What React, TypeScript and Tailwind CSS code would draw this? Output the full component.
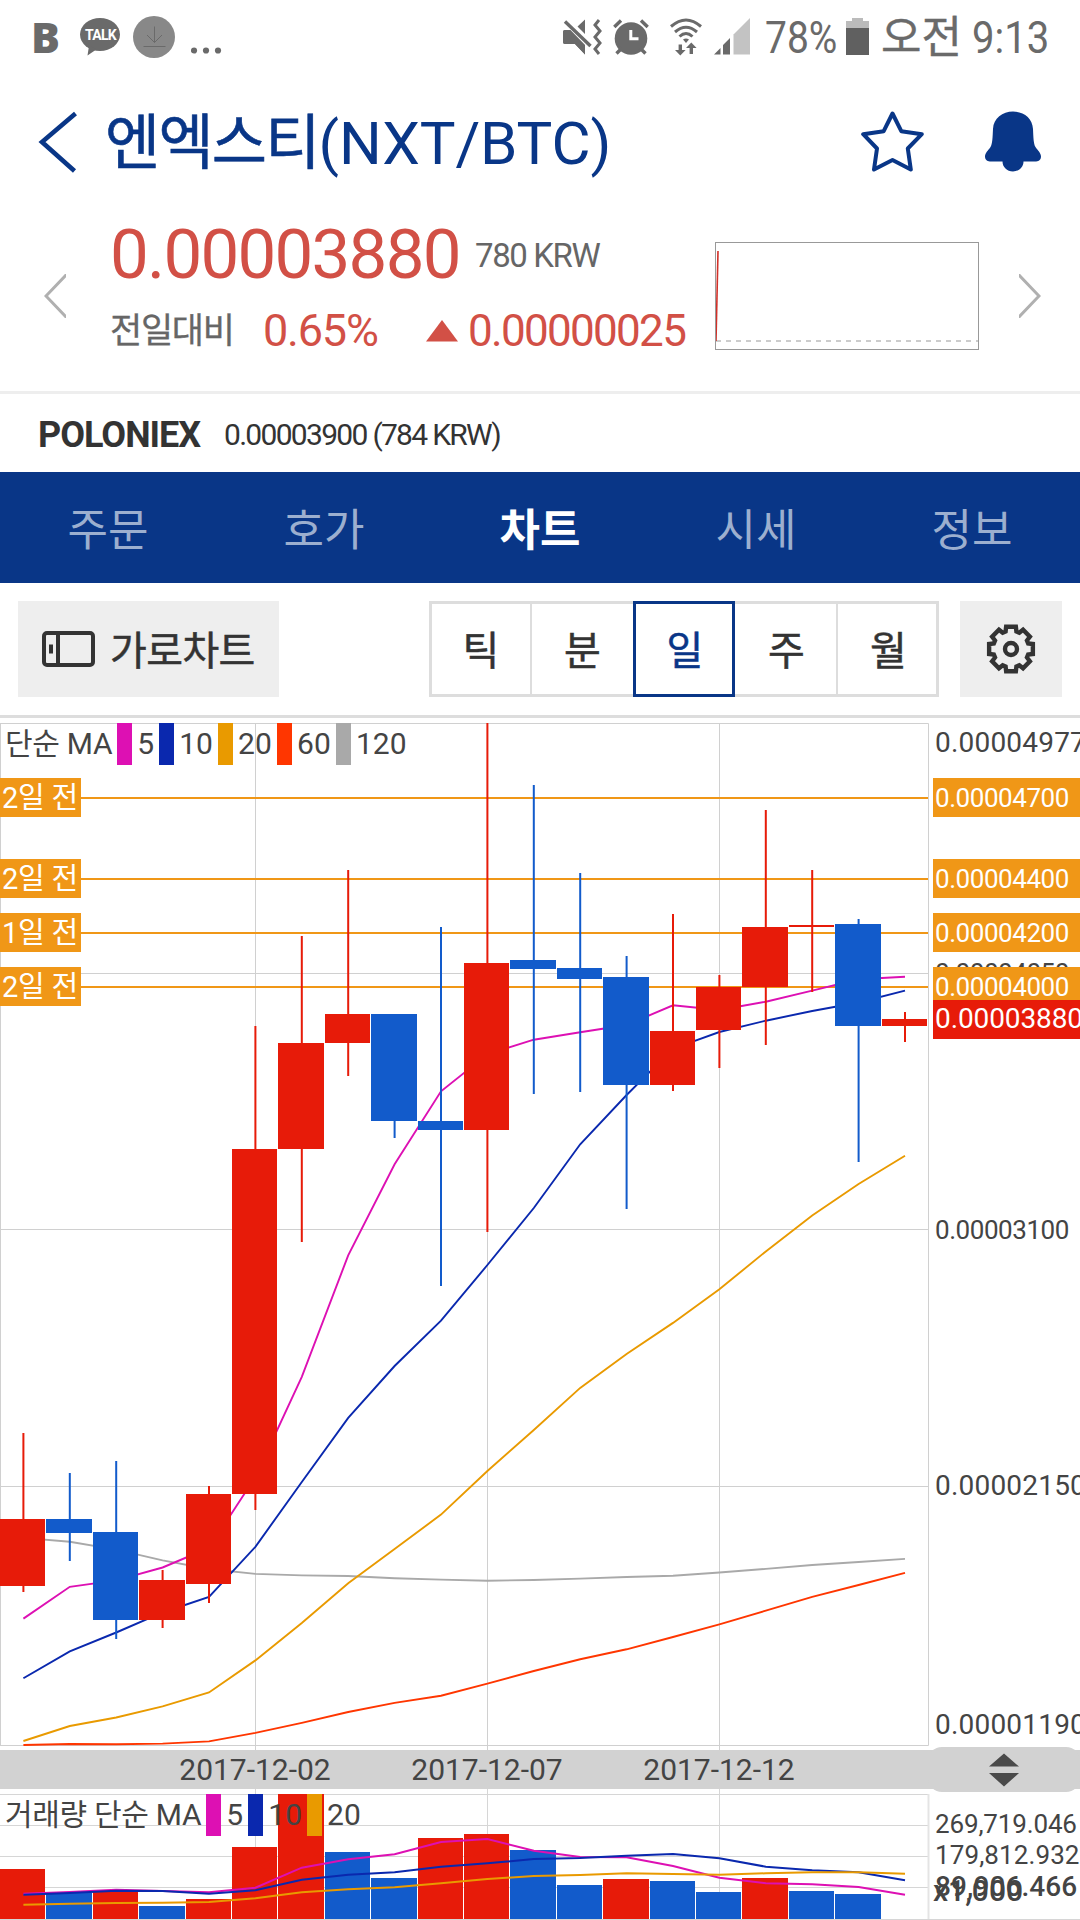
const STEP = 46.4;

const UP = "#e71b09";
const DOWN = "#125bcb";

// [direction, body top, body bottom, high, low] in chart pixels
const candles: [string, number, number, number, number][] = [
  [UP, 1519, 1586, 1433, 1592],
  [DOWN, 1519, 1533, 1473, 1561],
  [DOWN, 1532, 1620, 1461, 1639],
  [UP, 1580, 1620, 1570, 1628],
  [UP, 1494, 1584, 1486, 1603],
  [UP, 1149, 1494, 1026, 1510],
  [UP, 1043, 1149, 936, 1242],
  [UP, 1014, 1043, 870, 1076],
  [DOWN, 1014, 1121, 1014, 1138],
  [DOWN, 1121, 1130, 927, 1286],
  [UP, 963, 1130, 723, 1232],
  [DOWN, 960, 969, 785, 1094],
  [DOWN, 968, 979, 873, 1092],
  [DOWN, 977, 1085, 956, 1209],
  [UP, 1031, 1085, 914, 1091],
  [UP, 987, 1030, 975, 1068],
  [UP, 927, 987, 810, 1045],
  [UP, 925, 927, 870, 992],
  [DOWN, 924, 1026, 919, 1162],
  [UP, 1019, 1026, 1012, 1042],
];

const averages = [
  {
    color: "#a9a9a9",
    points: [1537.9, 1541.8, 1549.6, 1560.4, 1569, 1573.9, 1575.4, 1576, 1578.2, 1579.6, 1580.7, 1580, 1578.6, 1577, 1575.7, 1572.5, 1568.9, 1565, 1562, 1558.9],
  },
  {
    color: "#ff3600",
    points: [1745, 1744, 1744.3, 1743.6, 1741.4, 1732.9, 1722.9, 1712, 1702.9, 1695.7, 1683.6, 1671, 1659.3, 1649.3, 1637, 1624.3, 1610.7, 1596.8, 1585, 1572.9],
  },
  {
    color: "#e99a00",
    points: [1741, 1726, 1717.5, 1706.4, 1692.5, 1660.4, 1622.9, 1583.2, 1549, 1514.6, 1471, 1430, 1387.9, 1354, 1322.9, 1289.3, 1251.4, 1215.4, 1184, 1155.7],
  },
  {
    color: "#0a28ae",
    points: [1678.2, 1651.4, 1632.5, 1612.5, 1597, 1546.8, 1482, 1417.9, 1366, 1320.7, 1265, 1208, 1144.3, 1095, 1048.7, 1032, 1020.7, 1011, 1002.5, 990.7],
  },
  {
    color: "#dd10b3",
    points: [1618.6, 1586.8, 1580.4, 1567.5, 1548, 1477, 1376.8, 1255.4, 1164.3, 1091.3, 1054.3, 1039.7, 1032.3, 1025, 1005.3, 1010, 1001.7, 990.7, 979.3, 976.7],
  },
];

const volumes: [string, number][] = [
  [UP, 1869],
  [DOWN, 1893],
  [UP, 1892],
  [DOWN, 1906],
  [UP, 1899],
  [UP, 1847],
  [UP, 1794],
  [DOWN, 1852],
  [DOWN, 1878],
  [UP, 1838],
  [UP, 1834],
  [DOWN, 1850],
  [DOWN, 1885],
  [UP, 1879],
  [DOWN, 1881],
  [DOWN, 1892],
  [UP, 1878],
  [DOWN, 1891],
  [DOWN, 1894],
];

const volumeAverages = [
  {
    color: "#dd10b3",
    points: [1893.7, 1892, 1889.7, 1891, 1892.3, 1887.7, 1867.7, 1859.3, 1854.3, 1842, 1839, 1850.7, 1857, 1857.3, 1866, 1877.7, 1883.3, 1884.3, 1887, 1894.7],
  },
  {
    color: "#0a28ae",
    points: [1894.7, 1893, 1890.7, 1891, 1893.7, 1890.3, 1879.7, 1874.7, 1872.3, 1866.7, 1863.3, 1859, 1858, 1855.7, 1854, 1858.3, 1866.7, 1870.3, 1872.3, 1880.3],
  },
  {
    color: "#e99a00",
    points: [1904.7, 1903.7, 1903, 1902.7, 1902, 1898.3, 1892.3, 1889.3, 1887.3, 1883.3, 1879, 1876, 1875, 1873.3, 1874, 1874.7, 1873.3, 1872.3, 1872.3, 1873.7],
  },
];

const alerts = [
  { top: 55, label: "2일 전", price: "0.00004700" },
  { top: 136, label: "2일 전", price: "0.00004400" },
  { top: 190, label: "1일 전", price: "0.00004200" },
  { top: 244, label: "2일 전", price: "0.00004000" },
];

const legend = [
  { color: "#dd10b3", label: "5" },
  { color: "#0a28ae", label: "10" },
  { color: "#e99a00", label: "20" },
  { color: "#ff3600", label: "60" },
  { color: "#a9a9a9", label: "120" },
];

const tabs = ["주문", "호가", "차트", "시세", "정보"];

const left = (i: number) => Math.round(i * STEP);
const toPoints = (ys: number[]) => ys.map((y, i) => `${(i * STEP + 23.4).toFixed(1)},${y}`).join(" ");

function gearPoints() {
  const pts: string[] = [];
  for (let k = 0; k < 8; k++) {
    for (const [deg, r] of [[-17.5, 18], [-12.5, 22.4], [12.5, 22.4], [17.5, 18]]) {
      const a = ((k * 45 + deg - 90) * Math.PI) / 180;
      pts.push(`${(25 + r * Math.cos(a)).toFixed(2)},${(25 + r * Math.sin(a) * 1.02).toFixed(2)}`);
    }
  }
  return pts.join(" ");
}

function StatusBar() {
  return (
    <div className="relative flex h-[73px] items-center text-[#6a6a6a]">
      <span className="ml-[31px] w-[49px] font-['Open_Sans'] text-[43px] leading-none font-extrabold">B</span>
      <div className="relative h-[38px] w-10">
        <svg className="absolute inset-0" width="40" height="38" viewBox="0 0 40 38" fill="#6a6a6a">
          <ellipse cx="20" cy="16.5" rx="20" ry="16.5" />
          <path d="M9 28 L7.5 37.5 L17 31 Z" />
        </svg>
        <span className="absolute top-[10px] left-[5px] font-[Roboto] text-[14px] leading-none font-bold tracking-[-0.7px] text-white">
          TALK
        </span>
      </div>
      <svg className="ml-[13px]" width="42" height="42" viewBox="0 0 42 42" fill="none" stroke="#6a6a6a" strokeWidth="1">
        <circle cx="21" cy="21" r="21" fill="#888" stroke="none" />
        <path d="M21.5 10.5 V26.5 M14 19 L21.5 26.5 L29 19 M10.5 30.5 H32.5" />
      </svg>
      <svg className="ml-4" width="32" height="42" viewBox="0 0 32 42" fill="#6a6a6a">
        <circle cx="3" cy="34.5" r="3.1" />
        <circle cx="15" cy="34.5" r="3.1" />
        <circle cx="27" cy="34.5" r="3.1" />
      </svg>

      <svg className="ml-[340px]" width="40" height="36" viewBox="0 0 40 36" fill="#6a6a6a">
        <path d="M2 11 H7 L22 26 V35.5 L12 25 H2 Q0 25 0 23 V13 Q0 11 2 11 Z M22 0.5 V15 L14.5 7.5 Z" />
        <path d="M2 2.5 L27.5 26.5" stroke="#fff" strokeWidth="7" />
        <path d="M2 2.5 L27.5 27" stroke="#6a6a6a" strokeWidth="3.4" />
        <path d="M0 13 Q0 11 2 11 H7.5 L22 26 V35.5 L12 25 H2 Q0 25 0 23 Z" />
        <path d="M36 1 L32 6 L37 12 L32 18 L37 24 L32 30 L36 35" fill="none" stroke="#6a6a6a" strokeWidth="3" />
      </svg>
      <svg className="ml-[10px]" width="36" height="36" viewBox="0 0 36 36" fill="none" stroke="#6a6a6a" strokeWidth="3.4">
        <circle cx="18" cy="19.5" r="16.3" fill="#6a6a6a" stroke="none" />
        <path d="M1.3 8 L8 1.5 M34.7 8 L28 1.5 M3.5 34.5 L9 29 M32.5 34.5 L27 29" />
        <path d="M17.8 11 V19.7 H25.5" stroke="#fff" strokeWidth="3" />
      </svg>
      <svg className="ml-[21px]" width="32" height="38" viewBox="0 0 32 38" fill="none" stroke="#6a6a6a" strokeWidth="3">
        <path d="M1 8.5 Q16 -4.5 31 8.5 M5 14 Q16 4.5 27 14 M9.5 18.5 Q16 12.5 22.5 18.5" />
        <path d="M13 21.5 Q16 19.5 19 21.5 L16 25 Z" fill="#6a6a6a" stroke="none" />
        <path d="M10.3 26.5 V33 M21.3 29 V36" strokeWidth="3.4" />
        <path d="M5 32 H15.6 L10.3 37.5 Z M16 30 H26.6 L21.3 24.5 Z" fill="#6a6a6a" stroke="none" />
      </svg>
      <svg className="ml-3" width="36" height="37" viewBox="0 0 36 37">
        <path d="M0 36.5 L6.5 30 V36.5 Z M9 36.5 V27 L16 20 V36.5 Z" fill="#6a6a6a" />
        <path d="M19.5 36.5 V16.5 L36 0 V36.5 Z" fill="#c3c3c3" />
      </svg>
      <span className="ml-[15px] w-[81px] origin-left scale-x-[0.885] pt-[3px] text-[44px] leading-none">78%</span>
      <svg width="23" height="37" viewBox="0 0 23 37">
        <path d="M6 0 H17 V3 H23 V11 H0 V3 H6 Z" fill="#bbb" />
        <path d="M0 10 H23 V37 H0 Z" fill="#606060" />
      </svg>
      <span className="ml-[12px] w-[91px] pt-[3px] text-[44px] leading-none whitespace-nowrap [-webkit-text-stroke:0.4px]">오전</span>
      <span className="origin-left scale-x-[0.91] pt-[3px] text-[44px] leading-none">9:13</span>
    </div>
  );
}

function Header() {
  return (
    <div className="flex h-[138px] items-center text-[#093687]">
      <svg className="ml-[38px] shrink-0" width="40" height="62" viewBox="0 0 40 62" fill="none" stroke="#093687" strokeWidth="4.6">
        <path d="M37.5 2.5 L4 31 L36.5 60" />
      </svg>
      <h1 className="ml-[27px] pt-[4px] text-[60px] leading-none whitespace-nowrap">
        <span className="tracking-[-1.8px] [-webkit-text-stroke:0.6px]">엔엑스티</span>
        <span className="tracking-[-0.1px]">(NXT/BTC)</span>
      </h1>
      <div className="mr-[39px] ml-auto flex gap-[61px]">
        <svg width="63" height="62" viewBox="0 0 63 62" fill="none" stroke="#093687" strokeWidth="4" strokeLinejoin="round">
          <path d="M31.5 2.5 L40.3 20.2 L60.8 23.2 L46.8 37.5 L49.8 58.5 L31.5 49 L13 58.5 L16 37.5 L2.2 23.2 L22.7 20.2 Z" />
        </svg>
        <svg width="56" height="62" viewBox="0 0 56 62" fill="#093687">
          <path d="M28 0.5 C38.5 0.5 47.5 7 48 18 C48.4 26 48.5 33 50.5 36 C52.5 39 56 42 56 45.5 C56 49.5 53 50.5 50 50.5 H38.5 C38.5 56 34 60.5 28 60.5 C22 60.5 17.5 56 17.5 50.5 H6 C3 50.5 0 49.5 0 45.5 C0 42 3.5 39 5.5 36 C7.5 33 7.6 26 8 18 C8.5 7 17.5 0.5 28 0.5 Z" />
        </svg>
      </div>
    </div>
  );
}

function Quote() {
  return (
    <div className="border-b-[3px] border-[#eee] pb-[10px]">
      <div className="flex h-[170px] items-center">
        <svg className="ml-11 shrink-0" width="22" height="44" viewBox="0 0 22 44" fill="none" stroke="#b0b0b0" strokeWidth="3">
          <path d="M23 0 L2 22 L23 44" />
        </svg>
        <div className="mb-[7px] ml-[44px] w-[605px] text-[#d25046]">
          <div className="flex h-[76px] items-center">
            <span className="w-[365px] text-[69px] leading-none tracking-[-1.75px]">0.00003880</span>
            <span className="pt-[2px] text-[33px] leading-none tracking-[-1.4px] text-[#666]">780 KRW</span>
          </div>
          <div className="flex h-[76px] items-center leading-none whitespace-nowrap">
            <span className="w-[153px] pt-[2px] text-[35px] tracking-[-1.3px] text-[#666] [-webkit-text-stroke:0.3px]">전일대비</span>
            <span className="w-[163px] text-[45px] tracking-[-1.2px]">0.65%</span>
            <svg width="32" height="22" viewBox="0 0 32 22" fill="#d25046">
              <path d="M16 0 L32 21.5 H0 Z" />
            </svg>
            <span className="ml-[10px] text-[44px] tracking-[-1.7px]">0.00000025</span>
          </div>
        </div>
        <div className="flex h-[108px] w-[264px] border border-[#999]">
          <svg width="262" height="106" viewBox="0 0 262 106" fill="none">
            <path d="M0 98 H262" stroke="#ccc" strokeWidth="2" strokeDasharray="5 5" />
            <path d="M0 98 L2 8" stroke="#d23028" strokeWidth="1.6" />
          </svg>
        </div>
        <svg className="ml-10 shrink-0" width="22" height="44" viewBox="0 0 22 44" fill="none" stroke="#b0b0b0" strokeWidth="3">
          <path d="M-1 0 L20 22 L-1 44" />
        </svg>
      </div>
    </div>
  );
}

function Toolbar() {
  return (
    <div className="flex h-[135px] items-center border-b-[3px] border-[#ddd] text-[40px] leading-none text-[#333] [-webkit-text-stroke:0.5px]">
      <div className="ml-[18px] flex h-24 w-[261px] items-center bg-[#eee] pl-6">
        <svg width="53" height="36" viewBox="0 0 53 36" fill="none" stroke="#333" strokeWidth="4">
          <rect x="2" y="2" width="49" height="32" rx="3" />
          <path d="M16 2 V34" />
          <path d="M9 13.5 V22.5" />
        </svg>
        <span className="ml-[15px] pt-[5px] tracking-[-0.6px] whitespace-nowrap">가로차트</span>
      </div>
      <div className="relative ml-[150px] flex h-24 w-[510px] border-[3px] border-[#ddd]">
        <span className="flex w-[100px] items-center justify-center border-r-2 border-[#ddd] pt-[5px]">틱</span>
        <span className="flex w-[101px] items-center justify-center pt-[5px]">분</span>
        <span className="-my-[3px] flex w-[102px] items-center justify-center border-[3px] border-[#093687] pt-[5px] pl-[2px] text-[#093687]">
          일
        </span>
        <span className="flex w-[103px] items-center justify-center border-r-2 border-[#ddd] pt-[5px] pl-[2px]">주</span>
        <span className="flex w-[98px] items-center justify-center pt-[5px] pl-[3px]">월</span>
      </div>
      <div className="ml-[21px] flex h-24 w-[102px] items-center justify-center bg-[#eee]">
        <svg width="50" height="50" viewBox="0 0 50 50" fill="none" stroke="#333" strokeWidth="4.4">
          <polygon points={gearPoints()} />
          <circle cx="25" cy="25" r="6" />
        </svg>
      </div>
    </div>
  );
}

function Legend({ title, count }: { title: string; count: number }) {
  return (
    <div className="absolute left-[5px] flex h-[42px] items-center gap-[5px] text-[30px] leading-none whitespace-nowrap text-[#444]">
      <span className="tracking-[-0.3px]">{title}</span>
      {legend.slice(0, count).map((item) => (
        <div key={item.label} className="flex items-center gap-[5px]">
          <span className="h-[42px] w-[15px]" style={{ background: item.color }} />
          <span className="tracking-[0.1px]">{item.label}</span>
        </div>
      ))}
    </div>
  );
}

function PriceChart() {
  return (
    <div className="relative mt-[5px] h-[1027px]">
      <svg className="absolute inset-0" width="930" height="1027" viewBox="0 723 930 1027" fill="none">
        <path
          d="M0 723.5 H928.5 V1745.5 H0 M0.5 723 V1745 M0 973.5 H928 M0 1229.5 H928 M0 1486.5 H928 M255.5 723 V1750 M487.5 723 V1750 M719.5 723 V1750"
          stroke="#d0d0d0"
        />
        {alerts.map((a) => (
          <path key={a.top} d={`M80 ${a.top + 743} H928`} stroke="#f09717" strokeWidth="2" />
        ))}
        {averages.map((ma) => (
          <polyline key={ma.color} points={toPoints(ma.points)} stroke={ma.color} strokeWidth="1.9" />
        ))}
        {candles.map(([color, top, bottom, high, low], i) => (
          <g key={i} fill={color}>
            <rect x={i * STEP + 22.4} y={high} width="2" height={low - high} />
            <rect x={left(i)} y={top} width={left(i + 1) - left(i) - 1} height={bottom - top} />
          </g>
        ))}
      </svg>
      <Legend title="단순 MA" count={5} />

      <div className="absolute top-0 left-[933px] h-full w-[147px] overflow-hidden text-[#444]">
        <span className="absolute top-[6px] left-[2px] text-[28px] leading-none tracking-[0.2px]">0.00004977</span>
        <span className="absolute top-[237px] left-[2px] text-[26px] leading-none tracking-[-0.45px]">0.00004050</span>
        <span className="absolute top-[494px] left-[2px] text-[26px] leading-none tracking-[-0.45px]">0.00003100</span>
        <span className="absolute top-[749px] left-[2px] text-[28px] leading-none tracking-[0.2px]">0.00002150</span>
        <span className="absolute top-[988px] left-[2px] text-[28px] leading-none tracking-[0.2px]">0.00001190</span>
        {alerts.map((a) => (
          <span
            key={a.price}
            className="absolute flex h-[39px] w-full items-center bg-[#f09717] pl-[2px] text-[26px] leading-none tracking-[-0.45px] text-white"
            style={{ top: a.top }}
          >
            {a.price}
          </span>
        ))}
        <span className="absolute top-[277px] flex h-[39px] w-full items-center bg-[#e71b09] pb-[1px] pl-[2px] text-[28px] leading-none tracking-[-0.1px] text-white">
          0.00003880
        </span>
      </div>
      {alerts.map((a) => (
        <span
          key={a.price}
          className="absolute left-0 flex h-[39px] w-[81px] items-center bg-[#f09717] pt-[2px] pl-[2px] text-[29px] leading-none tracking-[-0.2px] whitespace-nowrap text-white"
          style={{ top: a.top }}
        >
          {a.label}
        </span>
      ))}
    </div>
  );
}

function DateBar() {
  return (
    <div className="relative flex h-[39px] items-center bg-[#d2d2d2] text-[30px] leading-none text-[#444]">
      <span className="ml-[139px] w-[232px] text-center">2017-12-02</span>
      <span className="w-[232px] text-center">2017-12-07</span>
      <span className="w-[232px] text-center">2017-12-12</span>
      <div className="absolute -top-[3px] right-0 flex h-[45px] w-[152px] items-center justify-center rounded-[14px] bg-[#d2d2d2]">
        <svg width="32" height="34" viewBox="0 0 32 34" fill="#4a4a4a">
          <path d="M16 0.5 L31 13.5 H1 Z M16 33.5 L31 20 H1 Z" />
        </svg>
      </div>
    </div>
  );
}

function VolumeChart() {
  return (
    <div className="relative h-[131px] overflow-hidden">
      <svg className="absolute inset-0" width="1080" height="131" viewBox="0 1789 1080 131" fill="none">
        <path
          d="M0 1794.5 H928 M0 1825.5 H928 M0 1856.5 H928 M0 1887.5 H928 M255.5 1789 V1919 M487.5 1789 V1919 M719.5 1789 V1919 M0 1919.5 H1080"
          stroke="#d6d6d6"
        />
        <path d="M928.5 1794 V1919" stroke="#e4e4e4" strokeWidth="2" />
        {volumes.map(([color, top], i) => (
          <rect key={i} x={left(i)} y={top} width={left(i + 1) - left(i) - 1} height={1919 - top} fill={color} />
        ))}
        {volumeAverages.map((ma) => (
          <polyline key={ma.color} points={toPoints(ma.points)} stroke={ma.color} strokeWidth="2" />
        ))}
      </svg>
      <div className="absolute top-[5px]">
        <Legend title="거래량 단순 MA" count={3} />
      </div>
      <div className="absolute top-[20px] left-[935px] flex flex-col text-[26px] leading-[31px] whitespace-nowrap text-[#444]">
        <span className="tracking-[-0.15px]">269,719.046</span>
        <span className="tracking-[0.1px]">179,812.932</span>
        <span className="text-[28px] font-medium tracking-[0.1px]">89,906.466</span>
      </div>
      <span className="absolute top-[87px] left-[933px] text-[30px] leading-none font-medium text-[#444]">x1,000</span>
    </div>
  );
}

export default function App() {
  return (
    <div className="h-[1920px] w-[1080px] overflow-hidden bg-white font-[Roboto,'Noto_Sans_CJK_KR',sans-serif]">
      <StatusBar />
      <Header />
      <Quote />
      <div className="flex h-[78px] items-center pt-[3px] pl-[38px] leading-none text-[#333]">
        <span className="w-[186px] text-[36px] font-bold tracking-[-1px]">POLONIEX</span>
        <span className="text-[30px] tracking-[-1.7px]">0.00003900 (784 KRW)</span>
      </div>
      <nav className="grid h-[111px] grid-cols-5 items-center bg-[#093687] pt-[6px] text-center text-[44px] leading-none text-[#9cafcf]">
        {tabs.map((tab) => (
          <span key={tab} className={tab === "차트" ? "font-bold text-white" : ""}>
            {tab}
          </span>
        ))}
      </nav>
      <Toolbar />
      <PriceChart />
      <DateBar />
      <VolumeChart />
    </div>
  );
}
